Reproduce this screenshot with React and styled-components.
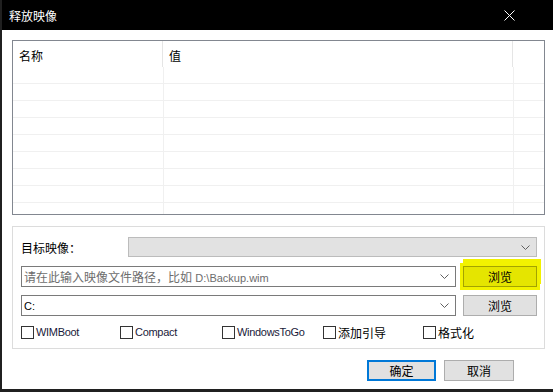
import React from 'react';
import styled, { createGlobalStyle } from 'styled-components';

const GlobalStyle = createGlobalStyle`
  html, body {
    margin: 0;
    padding: 0;
    background: #ffffff;
  }
  body {
    font-family: "Liberation Sans", "Noto Sans CJK SC", sans-serif;
    font-size: 12px;
    color: #000;
  }
`;

const Window = styled.div`
  width: 553px;
  height: 392px;
  box-sizing: border-box;
  background: #ffffff;
  border-left: 2px solid #202020;
  border-bottom: 3px solid #202020;
  display: flex;
  flex-direction: column;
  overflow: hidden;
`;

const TitleBar = styled.div`
  height: 30px;
  flex: none;
  background: #000;
  color: #fff;
  display: flex;
  align-items: center;
  justify-content: space-between;
  padding: 0 38px 0 7px;
  font-size: 12px;
`;

const Body = styled.div`
  flex: 1;
  display: flex;
  flex-direction: column;
  padding: 10px 8px 0 10px;
`;

const ListBox = styled.div`
  height: 175px;
  box-sizing: border-box;
  border: 1px solid #828790;
  overflow: hidden;
`;

const HeaderRow = styled.div`
  display: grid;
  grid-template-columns: 150px 350px 1fr;
  height: 26px;
`;

const HeaderCell = styled.div`
  padding: 6px 0 0 6px;
  box-sizing: border-box;
  border-right: ${p => (p.$last ? 'none' : '1px solid #e5e5e5')};
  height: 26px;
`;

const Row = styled.div`
  display: grid;
  grid-template-columns: 151px 350px 1fr;
  height: 17px;
  box-sizing: border-box;
  border-bottom: 1px solid #f0f0f0;
`;

const Cell = styled.div`
  border-right: ${p => (p.$last ? 'none' : '1px solid #f0f0f0')};
`;

const GroupBox = styled.div`
  margin-top: 11px;
  height: 123px;
  box-sizing: border-box;
  border: 1px solid #dcdcdc;
  padding: 10px 7px 0 8px;
  display: flex;
  flex-direction: column;
`;

const FormRow = styled.div`
  display: flex;
  align-items: center;
  gap: 7px;
  margin-top: ${p => p.$mt || 0}px;
`;

const Label = styled.div`
  width: 100px;
  flex: none;
`;

const Combo = styled.div`
  flex: 1;
  height: ${p => p.$h || 20}px;
  box-sizing: border-box;
  border: 1px solid ${p => (p.$disabled ? '#bcbcbc' : '#7a7a7a')};
  background: ${p => (p.$disabled ? '#e2e2e2' : '#ffffff')};
  display: flex;
  align-items: center;
  padding: 0 6px 0 2px;
  color: ${p => (p.$placeholder ? '#6d6d6d' : '#000')};
  white-space: nowrap;
  overflow: hidden;
`;

const ComboText = styled.div`
  flex: 1;
`;

const Latin = styled.span`
  font-size: 11px;
`;

const BrowseButton = styled.button`
  width: 74px;
  height: 21px;
  flex: none;
  box-sizing: border-box;
  font-family: inherit;
  font-size: 12px;
  color: #000;
  padding: 0;
  border: 1px solid ${p => (p.$marked ? '#a3a300' : '#adadad')};
  background: ${p => (p.$marked ? '#e5e500' : '#e1e1e1')};
  box-shadow: ${p => (p.$marked ? '0 0 0 3px #f2f200, 2px -5px 0 2px #f2f200' : 'none')};
`;

const Checks = styled.div`
  display: grid;
  grid-template-columns: 99px 102px 101px 100px auto;
  margin-top: 9px;
`;

const CheckItem = styled.label`
  display: flex;
  align-items: center;
  gap: 2px;
  height: 14px;
`;

const Box = styled.span`
  width: 13px;
  height: 13px;
  box-sizing: border-box;
  border: 1px solid #333;
  background: #fff;
  flex: none;
`;

const CheckText = styled.span`
  font-size: ${p => (p.$latin ? '11px' : '12px')};
  letter-spacing: ${p => (p.$latin ? '-0.3px' : '0')};
  color: ${p => (p.$latin ? '#1a1a3a' : '#000')};
`;

const Footer = styled.div`
  display: flex;
  justify-content: flex-end;
  gap: 8px;
  margin-top: 11px;
  padding-right: 31px;
`;

const DialogButton = styled.button`
  width: ${p => p.$w}px;
  height: 21px;
  box-sizing: border-box;
  padding: 0;
  font-family: inherit;
  font-size: 12px;
  color: #000;
  background: #e1e1e1;
  border: ${p => (p.$default ? '2px solid #0078d7' : '1px solid #adadad')};
`;

function Chevron({ color = '#606060' }) {
  return (
    <svg width="9" height="5" viewBox="0 0 9 5">
      <polyline points="0.5,0.5 4.5,4.5 8.5,0.5" fill="none" stroke={color} strokeWidth="1" />
    </svg>
  );
}

function CloseIcon() {
  return (
    <svg width="11" height="11" viewBox="0 0 11 11">
      <path d="M0.5 0.5 L10.5 10.5 M10.5 0.5 L0.5 10.5" stroke="#fff" strokeWidth="1" />
    </svg>
  );
}

const options = [
  { text: 'WIMBoot', latin: true },
  { text: 'Compact', latin: true },
  { text: 'WindowsToGo', latin: true },
  { text: '添加引导' },
  { text: '格式化' },
];

export default function App() {
  const rows = Array.from({ length: 9 });
  return (
    <>
      <GlobalStyle />
      <Window>
        <TitleBar>
          <span>释放映像</span>
          <CloseIcon />
        </TitleBar>
        <Body>
          <ListBox>
            <HeaderRow>
              <HeaderCell>名称</HeaderCell>
              <HeaderCell>值</HeaderCell>
              <HeaderCell $last />
            </HeaderRow>
            {rows.map((_, i) => (
              <Row key={i}>
                <Cell />
                <Cell />
                <Cell $last />
              </Row>
            ))}
          </ListBox>

          <GroupBox>
            <FormRow>
              <Label>目标映像：</Label>
              <Combo $disabled>
                <ComboText />
                <Chevron />
              </Combo>
            </FormRow>
            <FormRow $mt={9}>
              <Combo $placeholder $h={21}>
                <ComboText>
                  请在此输入映像文件路径，比如 <Latin>D:\Backup.wim</Latin>
                </ComboText>
                <Chevron />
              </Combo>
              <BrowseButton $marked>浏览</BrowseButton>
            </FormRow>
            <FormRow $mt={8}>
              <Combo $h={21}>
                <ComboText>
                  <Latin>C:</Latin>
                </ComboText>
                <Chevron />
              </Combo>
              <BrowseButton>浏览</BrowseButton>
            </FormRow>
            <Checks>
              {options.map(o => (
                <CheckItem key={o.text}>
                  <Box />
                  <CheckText $latin={o.latin}>{o.text}</CheckText>
                </CheckItem>
              ))}
            </Checks>
          </GroupBox>

          <Footer>
            <DialogButton $w={69} $default>确定</DialogButton>
            <DialogButton $w={70}>取消</DialogButton>
          </Footer>
        </Body>
      </Window>
    </>
  );
}
